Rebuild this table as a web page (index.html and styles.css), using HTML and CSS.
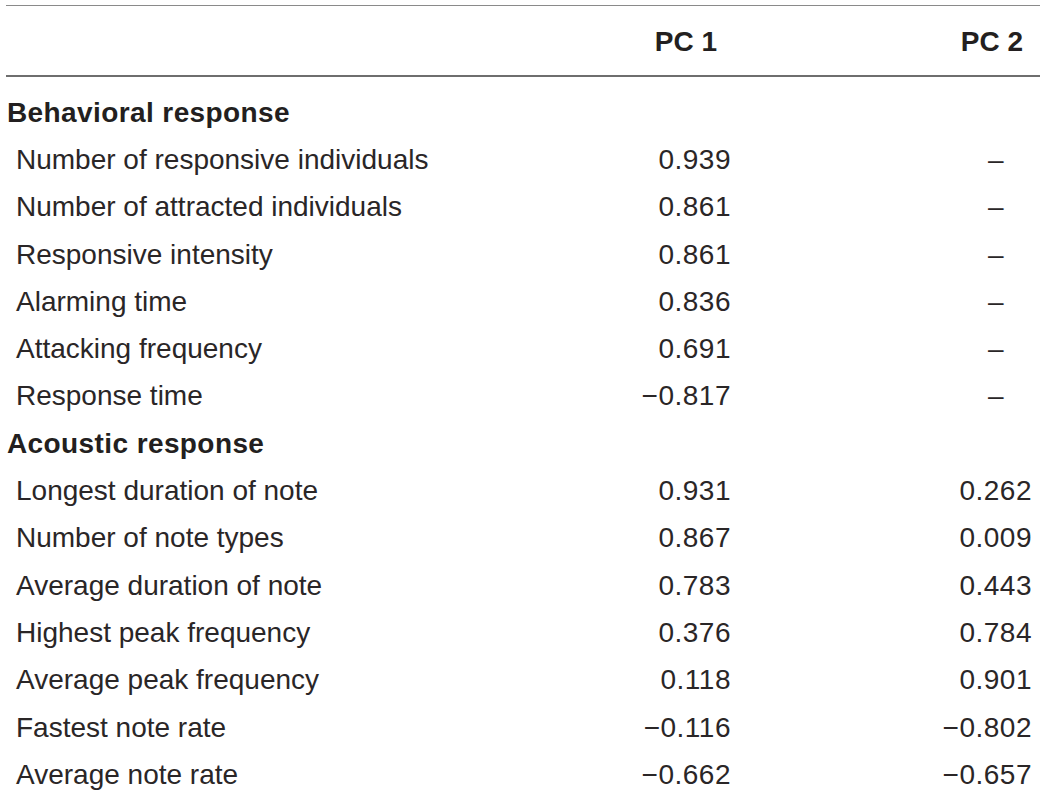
FILE: index.html
```html
<!DOCTYPE html>
<html lang="en">
<head>
    <meta charset="UTF-8">
    <title>PCA loadings</title>
    <link rel="stylesheet" href="styles.css">
</head>
<body>
    <table class="loadings">
        <colgroup>
            <col class="col-label">
            <col class="col-pc1">
            <col class="col-pc2">
        </colgroup>
        <thead>
            <tr>
                <th class="label"></th>
                <th class="pc1">PC 1</th>
                <th class="pc2">PC 2</th>
            </tr>
        </thead>
        <tbody>
            <tr class="section first">
                <td colspan="3">Behavioral response</td>
            </tr>
            <tr>
                <td class="label">Number of responsive individuals</td>
                <td class="pc1">0.939</td>
                <td class="pc2 nil">–</td>
            </tr>
            <tr>
                <td class="label">Number of attracted individuals</td>
                <td class="pc1">0.861</td>
                <td class="pc2 nil">–</td>
            </tr>
            <tr>
                <td class="label">Responsive intensity</td>
                <td class="pc1">0.861</td>
                <td class="pc2 nil">–</td>
            </tr>
            <tr>
                <td class="label">Alarming time</td>
                <td class="pc1">0.836</td>
                <td class="pc2 nil">–</td>
            </tr>
            <tr>
                <td class="label">Attacking frequency</td>
                <td class="pc1">0.691</td>
                <td class="pc2 nil">–</td>
            </tr>
            <tr>
                <td class="label">Response time</td>
                <td class="pc1">−0.817</td>
                <td class="pc2 nil">–</td>
            </tr>
            <tr class="section">
                <td colspan="3">Acoustic response</td>
            </tr>
            <tr>
                <td class="label">Longest duration of note</td>
                <td class="pc1">0.931</td>
                <td class="pc2">0.262</td>
            </tr>
            <tr>
                <td class="label">Number of note types</td>
                <td class="pc1">0.867</td>
                <td class="pc2">0.009</td>
            </tr>
            <tr>
                <td class="label">Average duration of note</td>
                <td class="pc1">0.783</td>
                <td class="pc2">0.443</td>
            </tr>
            <tr>
                <td class="label">Highest peak frequency</td>
                <td class="pc1">0.376</td>
                <td class="pc2">0.784</td>
            </tr>
            <tr>
                <td class="label">Average peak frequency</td>
                <td class="pc1">0.118</td>
                <td class="pc2">0.901</td>
            </tr>
            <tr>
                <td class="label">Fastest note rate</td>
                <td class="pc1">−0.116</td>
                <td class="pc2">−0.802</td>
            </tr>
            <tr>
                <td class="label">Average note rate</td>
                <td class="pc1">−0.662</td>
                <td class="pc2">−0.657</td>
            </tr>
        </tbody>
    </table>
</body>
</html>
```

FILE: styles.css
```css
body {
    margin: 0;
    padding: 5px 0 0 6px;
    background: #fff;
    color: #2a2627;
    font-family: 'Liberation Sans', Arial, sans-serif;
    font-size: 28px;
}

.loadings {
    width: 1034px;
    border-collapse: collapse;
    table-layout: fixed;
}

.col-label {
    width: 594px;
}

.col-pc1 {
    width: 160px;
}

.col-pc2 {
    width: 280px;
}

.loadings th,
.loadings td {
    padding: 0;
    white-space: nowrap;
}

/* header */
.loadings thead tr {
    border-top: 1px solid #8a8a8a;
    border-bottom: 2px solid #6e6e6e;
}

.loadings th {
    height: 66px;
    padding-top: 3px;
    font-weight: bold;
    text-align: right;
    vertical-align: middle;
    color: #231f20;
}

.loadings th.pc1 {
    padding-right: 43px;
}

.loadings th.pc2 {
    padding-right: 17px;
}

/* body rows */
.loadings td {
    height: 47.3px;
    vertical-align: middle;
}

.loadings tr.first td {
    padding-top: 12px;
}

.section td {
    font-weight: bold;
    letter-spacing: 0.4px;
    padding-left: 1px;
    color: #231f20;
}

td.label {
    padding-left: 10px;
}

td.pc1 {
    text-align: right;
    padding-right: 29px;
    letter-spacing: 0.5px;
}

td.pc2 {
    text-align: right;
    padding-right: 8px;
    letter-spacing: 0.5px;
}

td.nil {
    padding-right: 36px;
}
```
